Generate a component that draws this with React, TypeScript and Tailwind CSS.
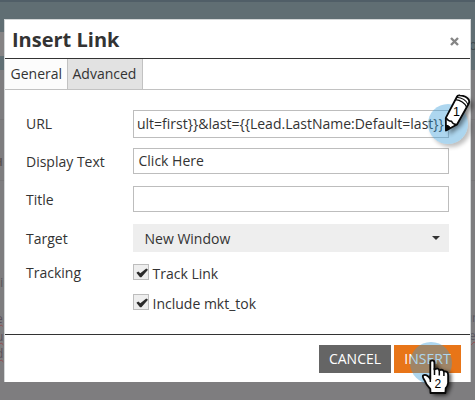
import type { ReactNode } from "react";

function Row({ label, className, labelClassName = "pt-px", children }: { label: string; className: string; labelClassName?: string; children: ReactNode }) {
  return (
    <div className={`flex items-center ${className}`}>
      <div className={`w-[108px] shrink-0 pl-px ${labelClassName}`}>{label}</div>
      {children}
    </div>
  );
}

function Check({ label }: { label: string }) {
  return (
    <label className="flex h-4 items-center gap-[3.5px] whitespace-nowrap">
      <span className="block size-4 border border-[#bdbdbd] bg-[#eeeeee]">
        <svg viewBox="0 0 14 14" className="size-[14px]">
          <path d="M2.4 7.8 L4.3 6.4 L6.3 8.2 L12.3 3.6 L14 4.8 L7.4 12.2 L6 12.2 Z" fill="#2b2b2b" />
        </svg>
      </span>
      <span className="pt-[3px]">{label}</span>
    </label>
  );
}

function Backdrop() {
  return (
    <div className="absolute inset-0 flex flex-col overflow-hidden bg-[#7e7d7f]">
      <div className="h-[2px] bg-[#505e67]" />
      <div className="h-[68px] bg-[#606e73]">
        <div className="mt-[30px] h-6 w-1 bg-[#858384]" />
      </div>
      <div className="mt-[49px] h-px bg-[#777678]" />
      <div className="mt-[60px] h-px bg-[#777678]" />
      <span className="absolute left-[469px] top-[37px] text-[14px] leading-4 text-[#414b50]">o</span>
      <span className="absolute left-[-5px] top-[155px] text-[10px] font-bold leading-[14px] text-[#59534f]">H</span>
      <span className="absolute left-[0px] top-[274px] text-[13px] leading-4 text-[#59565c]">i</span>
      <span className="absolute left-[-4px] top-[311px] text-[12px] leading-4 text-[#5b525b] underline decoration-[#934c50] decoration-wavy decoration-1">e</span>
      <span className="absolute left-[-4px] top-[329px] text-[12px] leading-4 text-[#5b525b] underline decoration-[#934c50] decoration-wavy decoration-1">u</span>
      <span className="absolute left-[-4px] top-[346px] text-[12px] leading-4 text-[#5b525b] underline decoration-[#934c50] decoration-wavy decoration-1">d</span>
      <span className="absolute left-[469px] top-[310px] text-[12px] leading-4 text-[#5b5963]">ır</span>
      <span className="absolute left-[469px] top-[328px] text-[12px] leading-4 text-[#5b5963] underline decoration-[#934c50] decoration-wavy decoration-1">er</span>
    </div>
  );
}

function PencilMarker() {
  return (
    <svg className="absolute left-[420px] top-[88px] h-[72px] w-[55px]" viewBox="420 88 55 72">
      <defs>
        <filter id="soft" x="-50%" y="-50%" width="200%" height="200%">
          <feGaussianBlur stdDeviation="2" />
        </filter>
        <clipPath id="outsideDisc">
          <path clipRule="evenodd" d="M420 88H475V160H420ZM428 124A20 20 0 1 0 468 124A20 20 0 1 0 428 124Z" />
        </clipPath>
      </defs>
      <g clipPath="url(#outsideDisc)">
        <circle cx="451" cy="127" r="20" fill="#000" opacity=".25" filter="url(#soft)" />
      </g>
      <circle cx="448" cy="124" r="20" fill="#379bd8" opacity=".41" />
      <path d="M449 135L452 117L462 98Q472 98 473 106L461 126Z" fill="#000" opacity=".45" filter="url(#soft)" />
      <path d="M446 130.5 L445.8 117.8 L456.8 97 Q457.4 95 460 95.4 Q466.5 96 468.8 99.8 Q469.7 101.5 468.8 103.5 L457 124.5 Z" fill="#fff" stroke="#080808" strokeWidth="1.8" strokeLinejoin="round" />
      <path d="M445.8 117.8Q448.5 121.5 451.5 121.2Q453.3 125 457 124.5" fill="none" stroke="#080808" strokeWidth="1.5" />
      <path d="M455.4 99.6Q463.5 100.5 466.5 107" fill="none" stroke="#080808" strokeWidth="1.3" />
      <path d="M456.6 97.2Q465 97.8 468 104.4" fill="none" stroke="#080808" strokeWidth="1.1" />
      <path d="M446 130.8L446 125.2Q449 125 450.6 128Z" fill="#080808" stroke="#080808" />
      <text x="453" y="116.2" fontSize="12.5" fill="#000" fontFamily="Liberation Sans, sans-serif">1</text>
    </svg>
  );
}

function HandMarker() {
  return (
    <svg className="absolute left-[405px] top-[335px] h-[65px] w-[60px]" viewBox="405 335 60 65">
      <defs>
        <filter id="shade" x="-50%" y="-50%" width="200%" height="200%">
          <feGaussianBlur stdDeviation="2" />
        </filter>
      </defs>
      <circle cx="431" cy="363" r="21" fill="#379bd8" opacity=".41" />
      <path d="M434 364L438 364L439 370L451 373L451 386L447 395H434L425 380L432 378Z" fill="#000" opacity=".75" filter="url(#shade)" />
      <path d="M430.3 379 L430.3 362.5 Q430.3 360.4 432.3 360.4 Q434.4 360.4 434.4 362.8 L434.4 369.5 Q438.2 367.6 439.3 370.2 Q443 368.9 443.8 371.5 Q448.1 370.8 448.1 375 L448.1 383 Q447.7 386 445.7 388.2 L445.4 393 L430.5 393 L430.3 389 Q426.2 385 424.7 380.5 Q422.2 377.2 423 375.5 Q426.3 373.4 430.3 379Z" fill="#fff" stroke="#090909" strokeWidth="1.8" strokeLinejoin="round" />
      <path d="M434.5 368V375M439.3 370V375.5M443.9 371.3V376M430.3 375V382" stroke="#090909" strokeWidth="1.5" />
      <text x="434.6" y="388" fontSize="12" fill="#000" fontFamily="Liberation Sans, sans-serif">2</text>
    </svg>
  );
}

export default function App() {
  return (
    <div className="relative h-[400px] w-[475px] overflow-hidden font-['Open_Sans','Noto_Sans',sans-serif] text-[14px] leading-5 text-[#333333]">
      <Backdrop />
      <div className="relative px-1 pt-[19px]">
        <section className="flex h-[363px] w-[467px] flex-col border-x border-t border-[#d4d7d8] bg-white">
          <header className="flex h-[39px] shrink-0 items-center justify-between border-b border-[#333333] pl-[7px] pr-[11px]">
            <h1 className="pt-[2px] text-[20px] font-bold leading-6">Insert Link</h1>
            <svg className="mt-[4px] size-[9px]" viewBox="0 0 9 9">
              <path d="M1 1L8 8M8 1L1 8" stroke="#858585" strokeWidth="2.4" />
            </svg>
          </header>
          <nav className="flex h-[31px] shrink-0 border-b border-[#c2c2c2]">
            <div className="flex w-[63px] items-center border-r border-[#c2c2c2] bg-[#fcfcfc] pl-[5.5px]">General</div>
            <div className="flex w-[75px] items-center border-r border-[#c2c2c2] bg-[#e2e2e2] pl-[4.5px]">Advanced</div>
          </nav>
          <main className="flex h-[244px] shrink-0 flex-col pl-[20px] pt-[20px]">
            <Row label="URL" labelClassName="pt-0" className="h-7">
              <div className="flex h-7 w-[316px] items-center overflow-hidden whitespace-nowrap border border-[#bdbdbd] pl-[3px]">ult=first{"}}"}&amp;last={"{{"}Lead.LastName:Default=last{"}}"}</div>
            </Row>
            <Row label="Display Text" className="mt-[10px] h-[26px]">
              <div className="h-[26px] w-[316px] border border-[#bdbdbd] pl-[4.5px] leading-6">Click Here</div>
            </Row>
            <Row label="Title" className="mt-3 h-[26px]">
              <div className="h-[26px] w-[316px] border border-[#bdbdbd]" />
            </Row>
            <Row label="Target" className="mt-3 h-7">
              <div className="flex h-7 w-[316px] items-center justify-between bg-[#eeeeee] pl-[11.5px] pr-[9px]">
                <span className="pt-px">New Window</span>
                <svg className="size-2" viewBox="0 0 8 8"><path d="M0 2H8L4 6Z" fill="#333" /></svg>
              </div>
            </Row>
            <Row label="Tracking" labelClassName="pt-[2px]" className="mt-3 h-4"><Check label="Track Link" /></Row>
            <Row label="" className="mt-[14px] h-4"><Check label="Include mkt_tok" /></Row>
          </main>
          <footer className="flex grow justify-end gap-[3px] border-t border-[#333333] pr-[9px] pt-[10px] text-white">
            <div className="flex h-7 w-[72px] items-center justify-center bg-[#656565]">CANCEL</div>
            <div className="flex h-7 w-[67px] items-center justify-center bg-[#e87518]">INSERT</div>
          </footer>
        </section>
      </div>
      <PencilMarker />
      <HandMarker />
    </div>
  );
}
